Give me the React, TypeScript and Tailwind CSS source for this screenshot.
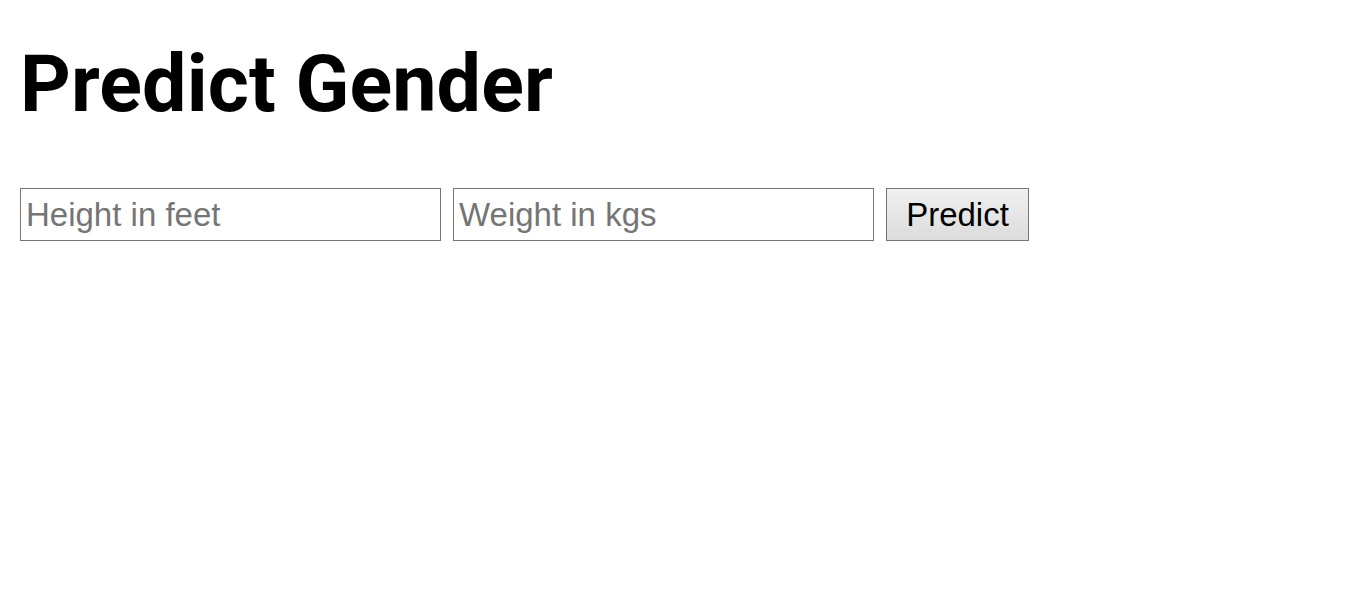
export default function App() {
  return (
    <div className="min-h-[611px] bg-white px-5 pt-[38px]">
      <h1 className="font-['Roboto',sans-serif] text-[79px] leading-[92px] font-bold tracking-[0.1px] text-black">
        Predict Gender
      </h1>
      <form className="mt-[58px] flex items-center gap-3 font-['Liberation_Sans',Arial,sans-serif]">
        <input
          type="text"
          placeholder="Height in feet"
          className="h-[53px] w-[421px] border border-[#767676] bg-white px-[5px] text-[33px] text-black placeholder:text-[#757575] outline-none"
        />
        <input
          type="text"
          placeholder="Weight in kgs"
          className="h-[53px] w-[421px] border border-[#767676] bg-white px-[5px] text-[33px] text-black placeholder:text-[#757575] outline-none"
        />
        <button
          type="button"
          className="h-[53px] w-[143px] border border-[#767676] bg-gradient-to-b from-[#f0f0f0] to-[#dcdcdc] text-[33px] text-black"
        >
          Predict
        </button>
      </form>
    </div>
  );
}
